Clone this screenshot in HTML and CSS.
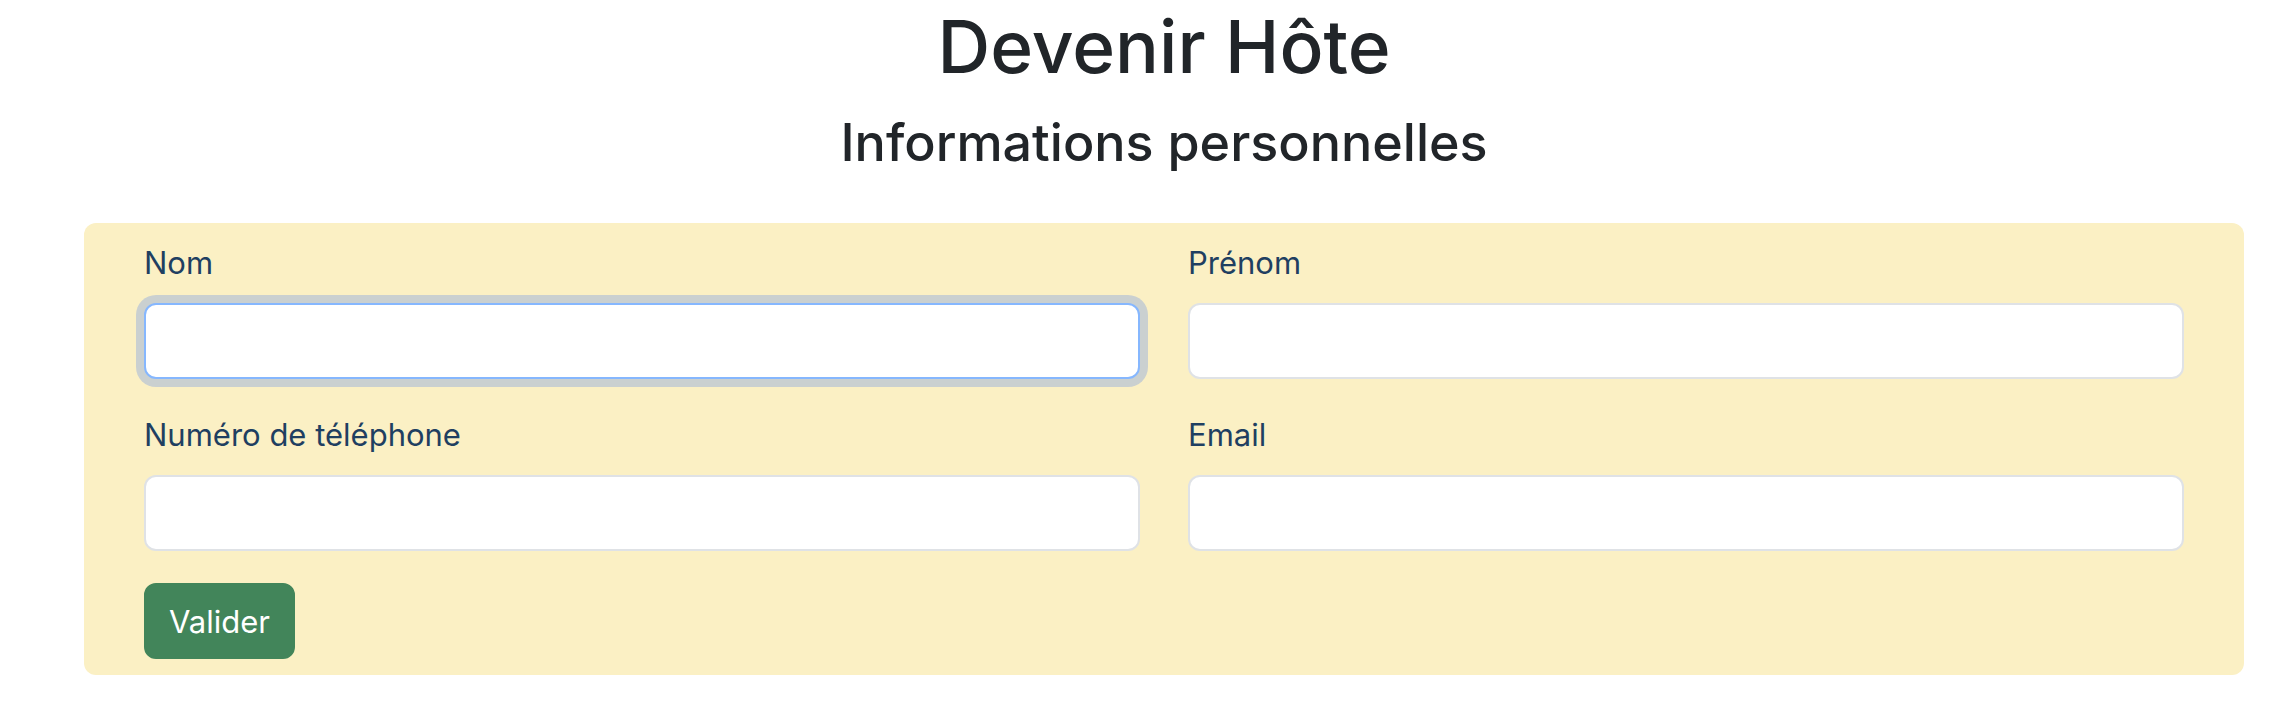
FILE: index.html
```html
<!DOCTYPE html>
<html lang="fr">
<head>
<meta charset="utf-8">
<title>Devenir Hôte</title>
<link rel="stylesheet" href="styles.css">
</head>
<body>
<main class="page">
  <h1 class="title">Devenir Hôte</h1>
  <h2 class="subtitle">Informations personnelles</h2>
  <form class="panel">
    <div class="grid">
      <div class="field">
        <label class="label" for="nom">Nom</label>
        <input class="input input-focus" id="nom" type="text">
      </div>
      <div class="field">
        <label class="label" for="prenom">Prénom</label>
        <input class="input" id="prenom" type="text">
      </div>
      <div class="field">
        <label class="label" for="tel">Numéro de téléphone</label>
        <input class="input" id="tel" type="tel">
      </div>
      <div class="field">
        <label class="label" for="email">Email</label>
        <input class="input" id="email" type="email">
      </div>
    </div>
    <button class="btn" type="button">Valider</button>
  </form>
</main>
</body>
</html>
```
FILE: styles.css
```css
html, body {
  margin: 0;
  padding: 0;
  background: #ffffff;
}

body {
  font-family: "Inter", "Noto Sans", sans-serif;
  color: #212529;
}

.page {
  margin: 0 50px 0 84px;
}

.title {
  margin: 6px 0 0;
  font-size: 73px;
  line-height: 82px;
  font-weight: 500;
  text-align: center;
  color: #212529;
}

.subtitle {
  margin: 24px 0 0;
  font-size: 52px;
  line-height: 62px;
  font-weight: 500;
  text-align: center;
  color: #212529;
}

.panel {
  margin-top: 49px;
  background: #fbf0c4;
  border-radius: 12px;
  padding: 16px 60px 16px;
}

.grid {
  display: grid;
  grid-template-columns: 1fr 1fr;
  column-gap: 48px;
}

.field {
  margin-bottom: 32px;
}

.label {
  display: block;
  font-size: 31px;
  line-height: 48px;
  margin-bottom: 16px;
  color: #1f3f61;
}

.input {
  display: block;
  box-sizing: border-box;
  width: 100%;
  height: 76px;
  margin: 0;
  padding: 0 24px;
  border: 2px solid #dfe2e6;
  border-radius: 12px;
  background: #ffffff;
  font: inherit;
  font-size: 31px;
  outline: none;
}

.input-focus {
  border-color: #86b7fe;
  box-shadow: 0 0 0 8px #cad0d0;
}

.btn {
  display: block;
  box-sizing: border-box;
  height: 76px;
  padding: 0 23px;
  border: 2px solid #42855a;
  border-radius: 12px;
  background: #42855a;
  color: #ffffff;
  font-family: "Inter", "Noto Sans", sans-serif;
  font-size: 31px;
  line-height: 1;
  cursor: pointer;
}
```
